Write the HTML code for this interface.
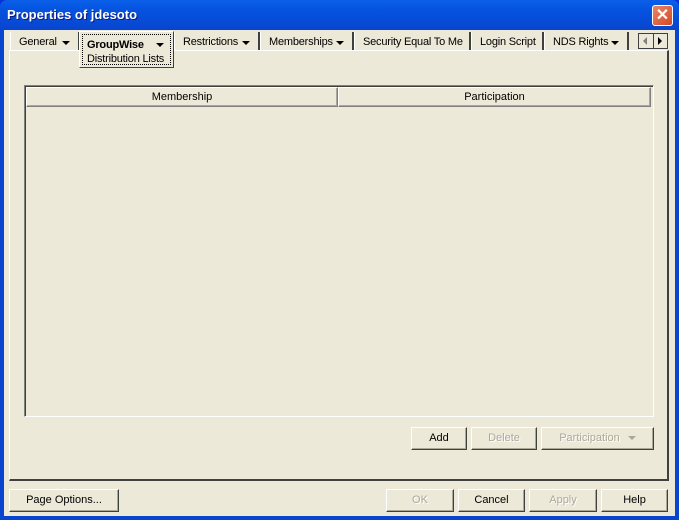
<!DOCTYPE html><html><head><style>
*{box-sizing:border-box}
body{margin:0;width:679px;height:520px;overflow:hidden;font-family:"Liberation Sans",sans-serif;font-size:11px;background:#0831d9}
.win{position:absolute;left:0;top:0;width:679px;height:520px;background:linear-gradient(#0a5fe8,#0553e0 10px,#0846d0 28px);border-radius:7px 7px 0 0}
.title{position:absolute;left:7px;top:7px;color:#fff;font-weight:bold;font-size:13px;text-shadow:1px 1px #0a1e80}
.close{position:absolute;left:652px;top:5px;width:21px;height:21px;border:1px solid #fff;border-radius:3px;background:linear-gradient(135deg,#e8866a,#d24a23);color:#fff;font-size:16px;font-weight:bold;text-align:center;line-height:19px}
.client{position:absolute;left:4px;top:30px;width:671px;height:486px;background:#ece9d8}
.abs{position:absolute}
.tab{position:absolute;top:2px;height:19px;border-left:1px solid #fff;border-right:2px solid #404040;padding:4px 0 0 8px;white-space:nowrap;overflow:hidden;letter-spacing:-0.2px}
.tab .ar{position:absolute;right:8px;top:9px;margin:0}
.ar{display:inline-block;width:0;height:0;border-left:4px solid transparent;border-right:4px solid transparent;border-top:4px solid #000;vertical-align:middle;margin-left:8px}
.panel{position:absolute;left:5px;top:20px;width:660px;height:431px;border-left:1px solid #fff;border-top:1px solid #fff;border-right:2px solid #404040;border-bottom:2px solid #404040}
.btn{position:absolute;height:23px;background:#ece9d8;border:1px solid;border-color:#fff #404040 #404040 #fff;box-shadow:inset -1px -1px #aca899;text-align:center;line-height:21px}
.dis{color:#aca899;text-shadow:1px 1px #fff}
.hd{position:absolute;top:1px;height:20px;border:1px solid;border-color:#fff #808080 #808080 #fff;box-shadow:inset -1px -1px #aca899;text-align:center;line-height:18px}
</style></head><body><div class="win">
<div class="title">Properties of jdesoto</div>
<div class="close">✕</div>
<div class="client">
<div class="tab" style="left:6px;width:70px;">General<span class="ar"></span></div>
<div class="abs" style="left:75px;top:1px;width:95px;height:37px;border:1px solid #fff;border-right-color:#404040;border-bottom-color:#404040;background:#ece9d8;z-index:2"><div style="position:absolute;left:2px;top:2px;right:2px;bottom:2px;border:1px dotted #000;padding:3px 0 0 4px;line-height:14px;letter-spacing:-0.2px"><b>GroupWise</b><span class="ar" style="position:absolute;right:6px;top:8px"></span><br>Distribution Lists</div></div>
<div class="tab" style="left:170px;width:86px;">Restrictions<span class="ar"></span></div>
<div class="tab" style="left:256px;width:94px;">Memberships<span class="ar"></span></div>
<div class="tab" style="left:350px;width:117px;">Security Equal To Me</div>
<div class="tab" style="left:467px;width:73px;">Login Script</div>
<div class="tab" style="left:540px;width:85px;">NDS Rights<span class="ar"></span></div>
<div class="abs" style="left:634px;top:3px;width:30px;height:16px;border:1px solid #404040;background:#ece9d8"><span style="position:absolute;left:4px;top:3px;border-top:4px solid transparent;border-bottom:4px solid transparent;border-right:4px solid #808080"></span><span style="position:absolute;left:14px;top:0;width:1px;height:14px;background:#404040"></span><span style="position:absolute;left:19px;top:3px;border-top:4px solid transparent;border-bottom:4px solid transparent;border-left:4px solid #000"></span></div>
<div class="panel"></div>
<div class="abs" style="left:20px;top:55px;width:630px;height:332px;border:1px solid;border-color:#808080 #fff #fff #808080;box-shadow:inset 1px 1px #404040">
<div class="hd" style="left:1px;width:312px">Membership</div>
<div class="hd" style="left:313px;width:313px">Participation</div>
</div>
<div class="btn" style="left:407px;top:397px;width:56px">Add</div>
<div class="btn dis" style="left:467px;top:397px;width:66px">Delete</div>
<div class="btn dis" style="left:537px;top:397px;width:113px">Participation<span class="ar" style="border-top-color:#aca899"></span></div>
<div class="btn" style="left:5px;top:459px;width:110px">Page Options...</div>
<div class="btn dis" style="left:382px;top:459px;width:68px">OK</div>
<div class="btn" style="left:454px;top:459px;width:67px">Cancel</div>
<div class="btn dis" style="left:525px;top:459px;width:68px">Apply</div>
<div class="btn" style="left:597px;top:459px;width:67px">Help</div>
</div></div></body></html>
